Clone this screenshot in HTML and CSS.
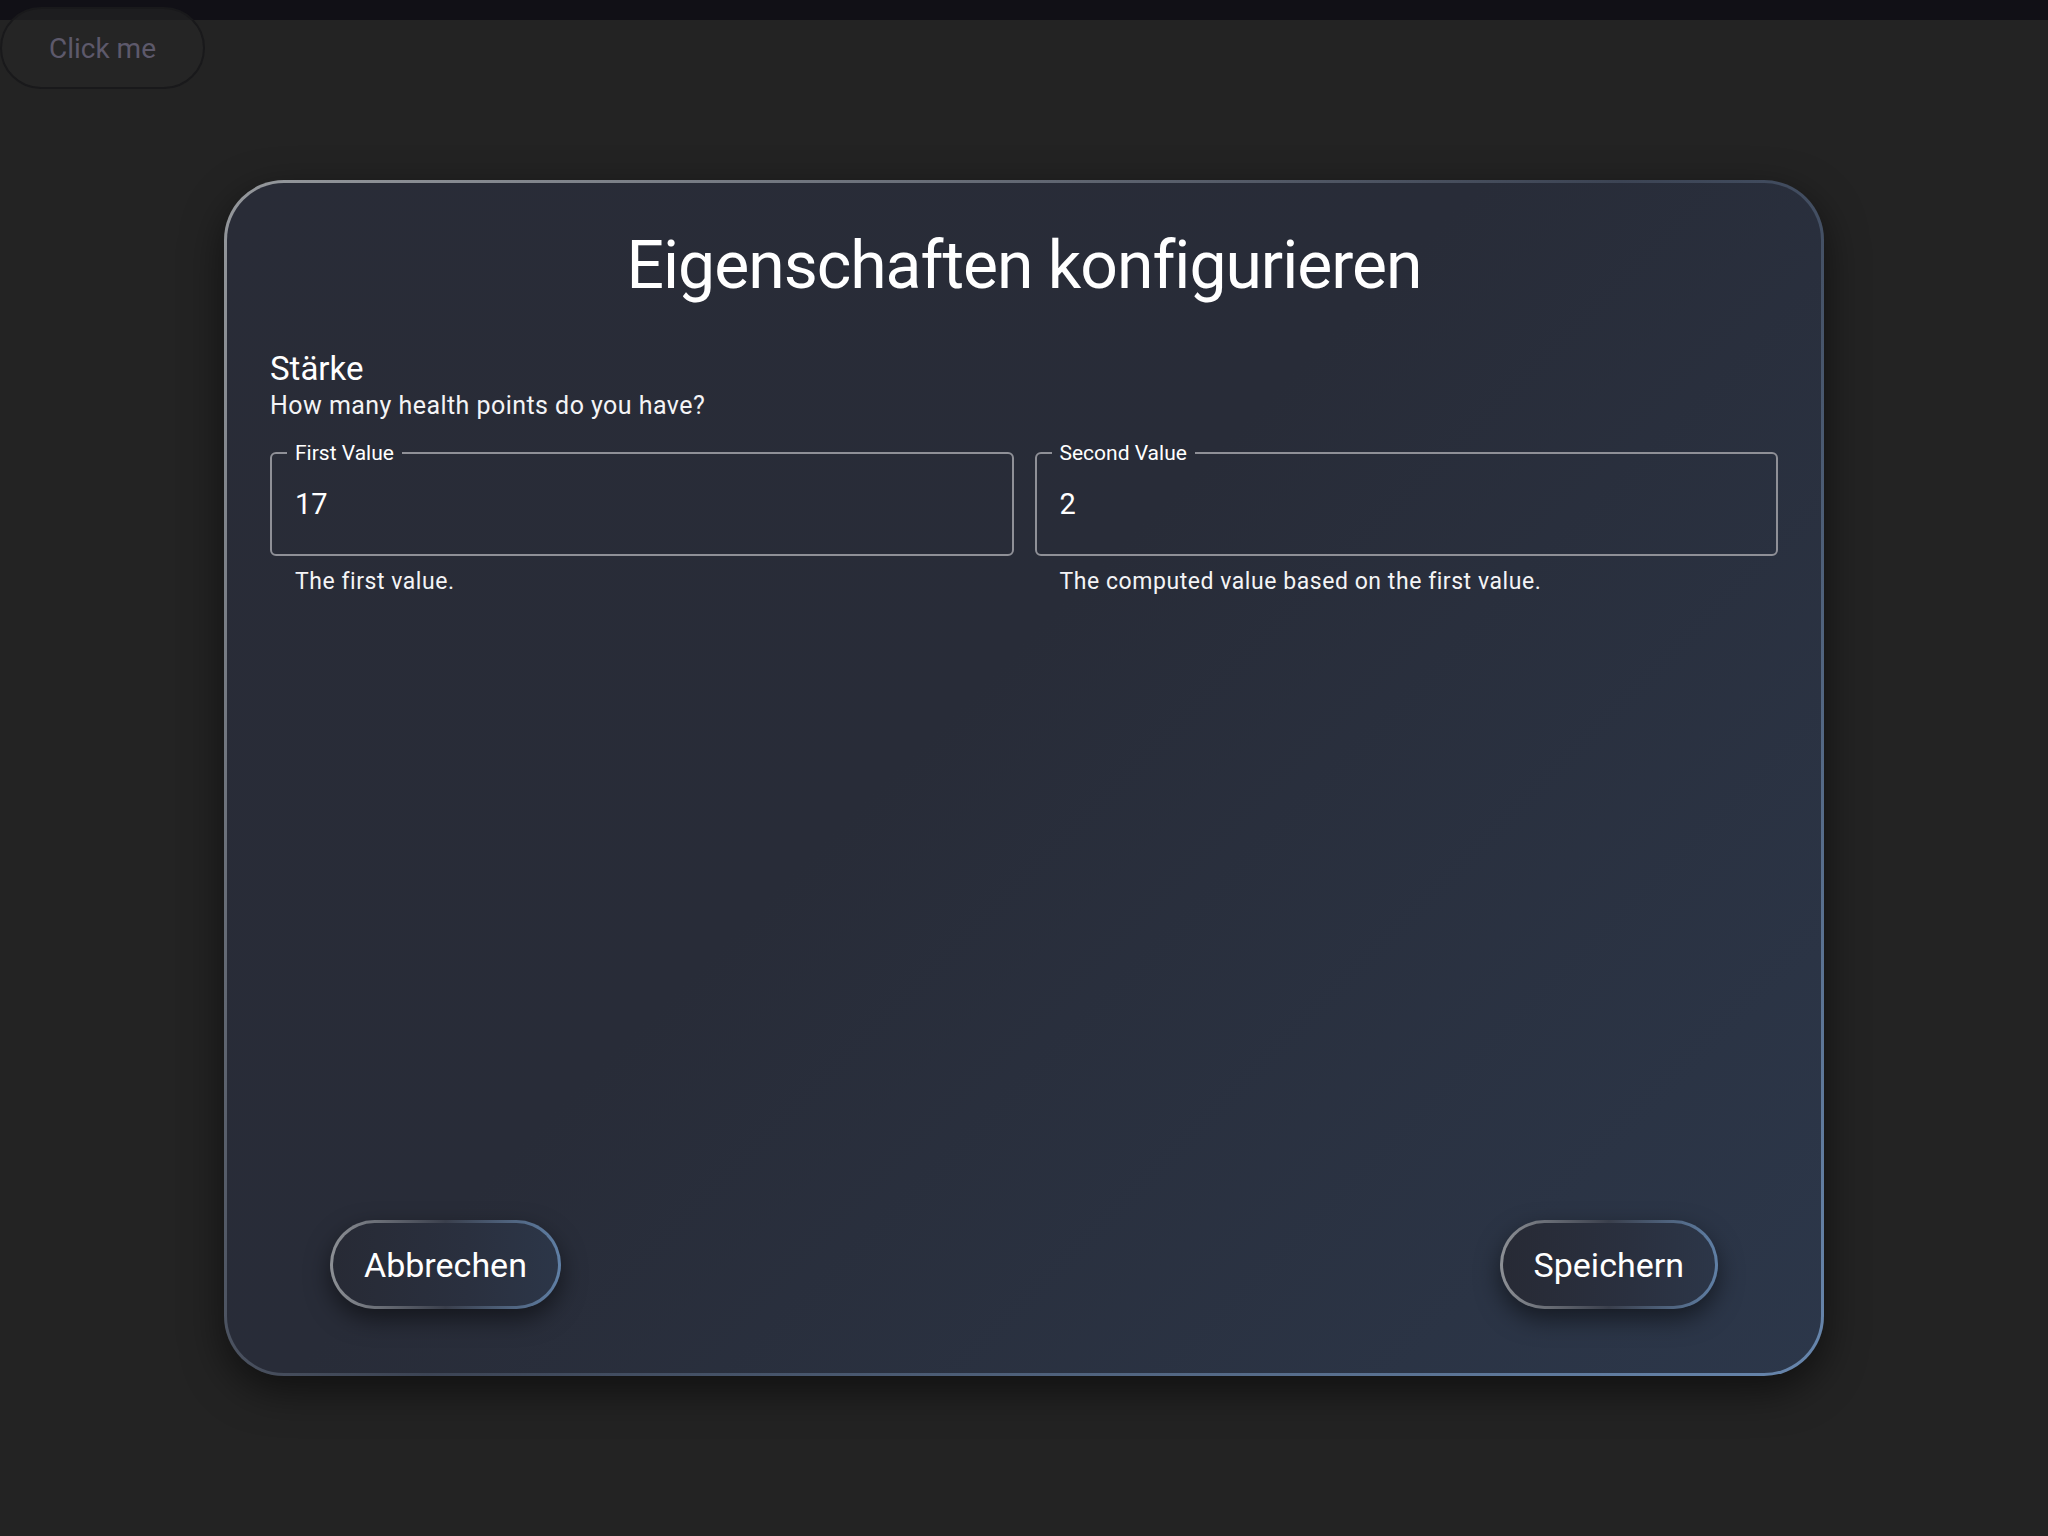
FILE: index.html
```html
<!DOCTYPE html>
<html lang="de">
<head>
<meta charset="utf-8">
<title>Eigenschaften konfigurieren</title>
<link rel="stylesheet" href="styles.css">
</head>
<body>
<div class="topbar"></div>
<button class="click-btn" type="button">Click me</button>
<main class="stage">
  <section class="dialog">
    <h1 class="dialog-title">Eigenschaften konfigurieren</h1>
    <div class="attr">
      <h2 class="attr-name">Stärke</h2>
      <p class="attr-question">How many health points do you have?</p>
      <div class="fields">
        <div class="field">
          <fieldset class="field-box">
            <legend class="field-label">First Value</legend>
            <input class="field-input" type="text" value="17">
          </fieldset>
          <p class="helper">The first value.</p>
        </div>
        <div class="field">
          <fieldset class="field-box">
            <legend class="field-label">Second Value</legend>
            <input class="field-input" type="text" value="2">
          </fieldset>
          <p class="helper">The computed value based on the first value.</p>
        </div>
      </div>
    </div>
    <div class="actions">
      <button class="pill-btn" type="button">Abbrechen</button>
      <button class="pill-btn" type="button">Speichern</button>
    </div>
  </section>
</main>
</body>
</html>
```
FILE: styles.css
```css
html, body {
  margin: 0;
  padding: 0;
}

body {
  background: #232323;
  font-family: Roboto, "Noto Sans", sans-serif;
  color: #ffffff;
  height: 1536px;
  overflow: hidden;
  position: relative;
}

.topbar {
  height: 20px;
  background: #111016;
}

.click-btn {
  position: absolute;
  left: 0;
  top: 7px;
  width: 205px;
  height: 82px;
  box-sizing: border-box;
  border: 2px solid #19191b;
  border-radius: 41px;
  background: rgba(40, 40, 40, 0.56);
  color: #5d596b;
  font-family: Roboto, sans-serif;
  font-size: 28px;
  padding: 0;
}

.stage {
  height: 1516px;
  display: flex;
  align-items: center;
  justify-content: center;
}

.dialog {
  width: 1600px;
  height: 1196px;
  box-sizing: border-box;
  border: 3px solid transparent;
  border-radius: 60px;
  background:
    linear-gradient(135deg, #292c37 0%, #282c38 45%, #2c374a 100%) padding-box,
    linear-gradient(135deg, #95989c 0%, #3c4454 50%, #6786ad 100%) border-box;
  box-shadow: 0 14px 40px rgba(0, 0, 0, 0.55);
  padding: 43px 43px 44px;
  display: flex;
  flex-direction: column;
}

.dialog-title {
  margin: 0;
  font-size: 66px;
  font-weight: 400;
  line-height: 80px;
  letter-spacing: -1px;
  text-align: center;
  color: #ffffff;
}

.attr {
  margin-top: 43px;
}

.attr-name {
  margin: 0;
  font-size: 33px;
  font-weight: 400;
  line-height: normal;
}

.attr-question {
  margin: 3px 0 0;
  font-size: 25px;
  line-height: normal;
  letter-spacing: 0.45px;
  color: #f4f4f6;
}

.fields {
  display: grid;
  grid-template-columns: 1fr 1fr;
  column-gap: 21px;
  margin-top: 21px;
}

.field-box {
  margin: 0;
  padding: 22px 23px 33px;
  border: 2px solid #8f9097;
  border-radius: 6px;
  min-width: 0;
}

.field-label {
  margin-left: -8px;
  padding: 0 8px;
  font-size: 21px;
  line-height: normal;
  color: #ffffff;
}

.field-input {
  display: block;
  width: 100%;
  box-sizing: border-box;
  height: 34px;
  padding: 0;
  border: none;
  outline: none;
  background: transparent;
  color: #ffffff;
  font-family: Roboto, sans-serif;
  font-size: 29px;
  line-height: 34px;
}

.helper {
  margin: 12px 0 0 25px;
  font-size: 23px;
  line-height: normal;
  letter-spacing: 0.55px;
  color: #f4f4f6;
}

.actions {
  margin-top: auto;
  margin-bottom: 20px;
  padding: 0 60px;
  display: flex;
  justify-content: space-between;
}

.pill-btn {
  height: 89px;
  box-sizing: border-box;
  padding: 0 31px;
  border: 3px solid transparent;
  border-radius: 45px;
  background:
    linear-gradient(90deg, #272a35 0%, #2a303f 60%, #2c3648 100%) padding-box,
    linear-gradient(90deg, #8d9095 0%, #3a3f4c 50%, #6080a6 100%) border-box;
  box-shadow: 0 10px 24px rgba(0, 0, 0, 0.5);
  color: #ffffff;
  font-family: Roboto, sans-serif;
  font-size: 34px;
  line-height: normal;
}
```
